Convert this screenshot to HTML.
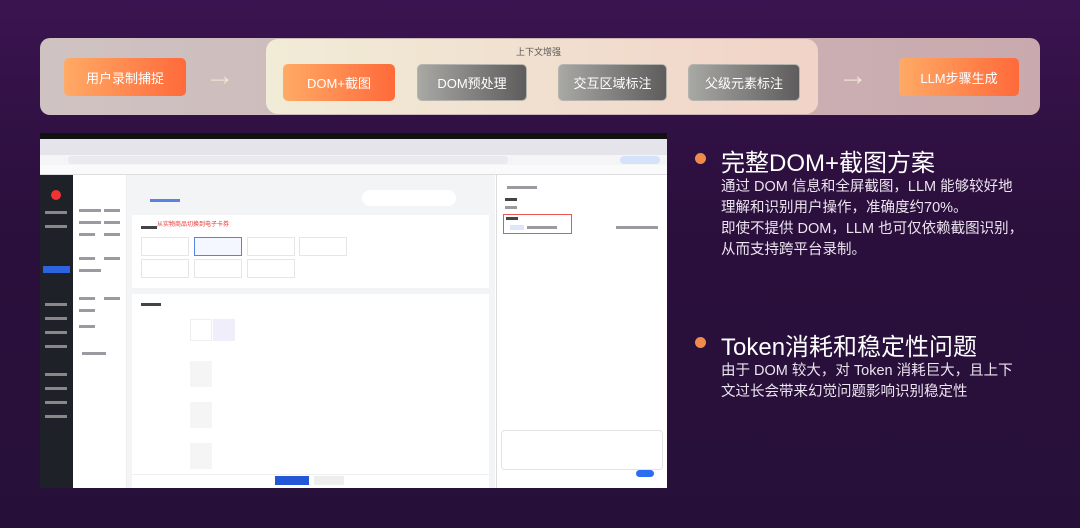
<!DOCTYPE html>
<html><head><meta charset="utf-8"><style>
*{margin:0;padding:0;box-sizing:border-box}
body{width:1080px;height:528px;overflow:hidden;position:relative;font-family:"Liberation Sans","Noto Sans CJK SC",sans-serif;background:linear-gradient(180deg,#3a1450 0%,#2b0f3c 40%,#26103a 100%)}
.abs{position:absolute}
.banner{left:40px;top:38px;width:1000px;height:77px;border-radius:10px;background:linear-gradient(90deg,#cfc3c2,#c9a9ad)}
.inner{left:266px;top:39px;width:552px;height:75px;border-radius:12px;background:linear-gradient(90deg,#f1ecd7,#f1d3c7)}
.box{position:absolute;display:flex;align-items:center;justify-content:center;color:#fff;font-size:13px;border-radius:5px}
.or{background:linear-gradient(90deg,#ffaa66,#ff6a3a)}
.gr{background:linear-gradient(90deg,#a8a8a4,#5e5c5c);border:1px solid #b5b3ae}
.arr{position:absolute;color:#efe2cf;font-size:30px;line-height:20px;font-weight:bold}
.ss{left:40px;top:133px;width:627px;height:355px;background:#fff;overflow:hidden}
.h{color:#fff;font-size:24px;position:absolute;left:721px}
.p{color:#ece4ef;font-size:14.5px;line-height:21px;position:absolute;left:721px}
.dot{position:absolute;left:695px;width:11px;height:11px;border-radius:50%;background:#f08a4a}
.g{position:absolute;height:3px;background:#9a9aa0}
.w{position:absolute;height:3px;background:#c8cad0}
</style></head><body>
<div class="abs banner"></div>
<div class="abs inner"></div>
<div class="abs" style="left:516px;top:45px;font-size:9px;color:#555">上下文增强</div>
<div class="box or" style="left:64px;top:58px;width:122px;height:38px">用户录制捕捉</div>
<div class="arr" style="left:205px;top:66px">→</div>
<div class="box or" style="left:283px;top:64px;width:112px;height:37px">DOM+截图</div>
<div class="box gr" style="left:417px;top:64px;width:110px;height:37px">DOM预处理</div>
<div class="box gr" style="left:558px;top:64px;width:109px;height:37px">交互区域标注</div>
<div class="box gr" style="left:688px;top:64px;width:112px;height:37px">父级元素标注</div>
<div class="arr" style="left:838px;top:66px">→</div>
<div class="box or" style="left:899px;top:58px;width:120px;height:38px">LLM步骤生成</div>

<div class="abs ss">
 <div class="abs" style="left:0;top:0;width:627px;height:6px;background:#111"></div>
 <div class="abs" style="left:0;top:6px;width:627px;height:16px;background:#e4e4ea"></div>
 <div class="abs" style="left:0;top:22px;width:627px;height:10px;background:#f5f5f7"></div>
 <div class="abs" style="left:28px;top:23px;width:440px;height:8px;border-radius:4px;background:#e9e9ee"></div>
 <div class="abs" style="left:580px;top:23px;width:40px;height:8px;border-radius:4px;background:#d6e2f8"></div>
 <div class="abs" style="left:0;top:32px;width:627px;height:10px;background:#fafafa;border-bottom:1px solid #ddd"></div>
 <div class="abs" style="left:0;top:42px;width:33px;height:313px;background:#1f2128"></div>
 <div class="abs" style="left:3px;top:133px;width:27px;height:7px;background:#2c64e0"></div>
 <div class="abs" style="left:11px;top:57px;width:10px;height:10px;border-radius:50%;background:#e33"></div>
 <div class="w" style="left:5px;top:78px;width:22px;background:#888"></div>
 <div class="w" style="left:5px;top:92px;width:22px;background:#888"></div>
 <div class="w" style="left:5px;top:170px;width:22px;background:#888"></div>
 <div class="w" style="left:5px;top:184px;width:22px;background:#888"></div>
 <div class="w" style="left:5px;top:198px;width:22px;background:#888"></div>
 <div class="w" style="left:5px;top:212px;width:22px;background:#888"></div>
 <div class="w" style="left:5px;top:240px;width:22px;background:#888"></div>
 <div class="w" style="left:5px;top:254px;width:22px;background:#888"></div>
 <div class="w" style="left:5px;top:268px;width:22px;background:#888"></div>
 <div class="w" style="left:5px;top:282px;width:22px;background:#888"></div>
 <div class="abs" style="left:33px;top:42px;width:54px;height:313px;background:#fff;border-right:1px solid #eee"></div>
 <div class="g" style="left:39px;top:76px;width:22px"></div><div class="g" style="left:64px;top:76px;width:16px"></div>
 <div class="g" style="left:39px;top:88px;width:22px"></div><div class="g" style="left:64px;top:88px;width:16px"></div>
 <div class="g" style="left:39px;top:100px;width:16px"></div><div class="g" style="left:64px;top:100px;width:16px"></div>
 <div class="g" style="left:39px;top:124px;width:16px"></div><div class="g" style="left:64px;top:124px;width:16px"></div>
 <div class="g" style="left:39px;top:136px;width:22px"></div>
 <div class="g" style="left:39px;top:164px;width:16px"></div><div class="g" style="left:64px;top:164px;width:16px"></div>
 <div class="g" style="left:39px;top:176px;width:16px"></div>
 <div class="g" style="left:39px;top:192px;width:16px"></div>
 <div class="g" style="left:42px;top:219px;width:24px"></div>
 <div class="abs" style="left:87px;top:42px;width:368px;height:313px;background:#f3f4f6"></div>
 <div class="abs" style="left:92px;top:82px;width:357px;height:73px;background:#fff"></div>
 <div class="abs" style="left:92px;top:161px;width:357px;height:180px;background:#fff"></div>
 <div class="g" style="left:110px;top:66px;width:30px;background:#5a82e0"></div>
 <div class="abs" style="left:322px;top:57px;width:94px;height:16px;border-radius:8px;background:#fff"></div>
 <div class="abs" style="left:117px;top:86px;font-size:6px;color:#e33">从实物商品切换到电子卡券</div>
 <div class="g" style="left:101px;top:93px;width:16px;background:#444"></div>
 <div class="abs" style="left:101px;top:104px;width:48px;height:19px;border:1px solid #e6e6e6"></div>
 <div class="abs" style="left:154px;top:104px;width:48px;height:19px;border:1px solid #5a82e0;background:#f4f7ff"></div>
 <div class="abs" style="left:207px;top:104px;width:48px;height:19px;border:1px solid #e6e6e6"></div>
 <div class="abs" style="left:259px;top:104px;width:48px;height:19px;border:1px solid #e6e6e6"></div>
 <div class="abs" style="left:101px;top:126px;width:48px;height:19px;border:1px solid #e6e6e6"></div>
 <div class="abs" style="left:154px;top:126px;width:48px;height:19px;border:1px solid #e6e6e6"></div>
 <div class="abs" style="left:207px;top:126px;width:48px;height:19px;border:1px solid #e6e6e6"></div>
 <div class="g" style="left:101px;top:170px;width:20px;background:#444"></div>
 <div class="abs" style="left:150px;top:186px;width:22px;height:22px;border:1px solid #eee"></div>
 <div class="abs" style="left:173px;top:186px;width:22px;height:22px;background:#f0eefb"></div>
 <div class="abs" style="left:150px;top:228px;width:22px;height:26px;background:#f5f5f5"></div>
 <div class="abs" style="left:150px;top:269px;width:22px;height:26px;background:#f5f5f5"></div>
 <div class="abs" style="left:150px;top:310px;width:22px;height:26px;background:#f5f5f5"></div>
 <div class="abs" style="left:92px;top:341px;width:357px;height:14px;background:#fff;border-top:1px solid #eee"></div>
 <div class="abs" style="left:235px;top:343px;width:34px;height:9px;background:#2457d6"></div>
 <div class="abs" style="left:274px;top:343px;width:30px;height:9px;background:#eee"></div>
 <div class="abs" style="left:456px;top:42px;width:171px;height:313px;background:#fff;border-left:1px solid #ddd"></div>
 <div class="g" style="left:467px;top:53px;width:30px"></div>
 <div class="g" style="left:465px;top:65px;width:12px;background:#444"></div>
 <div class="g" style="left:465px;top:73px;width:12px"></div>
 <div class="abs" style="left:463px;top:81px;width:69px;height:20px;border:1.5px solid #e55"></div>
 <div class="g" style="left:466px;top:84px;width:12px;background:#444"></div>
 <div class="abs" style="left:470px;top:92px;width:14px;height:5px;background:#dbe6fb"></div>
 <div class="g" style="left:487px;top:93px;width:30px"></div>
 <div class="g" style="left:576px;top:93px;width:42px"></div>
 <div class="abs" style="left:461px;top:297px;width:162px;height:40px;border:1px solid #e3e3e3;border-radius:4px"></div>
 <div class="abs" style="left:596px;top:337px;width:18px;height:7px;border-radius:4px;background:#2c6cf0"></div>
</div>

<div class="dot" style="top:153px"></div>
<div class="h" style="top:143px">完整DOM+截图方案</div>
<div class="p" style="top:177px">通过 DOM 信息和全屏截图，LLM 能够较好地<br>理解和识别用户操作，准确度约70%。<br>即使不提供 DOM，LLM 也可仅依赖截图识别，<br>从而支持跨平台录制。</div>
<div class="dot" style="top:337px"></div>
<div class="h" style="top:327px">Token消耗和稳定性问题</div>
<div class="p" style="top:361px">由于 DOM 较大，对 Token 消耗巨大，且上下<br>文过长会带来幻觉问题影响识别稳定性</div>
</body></html>
